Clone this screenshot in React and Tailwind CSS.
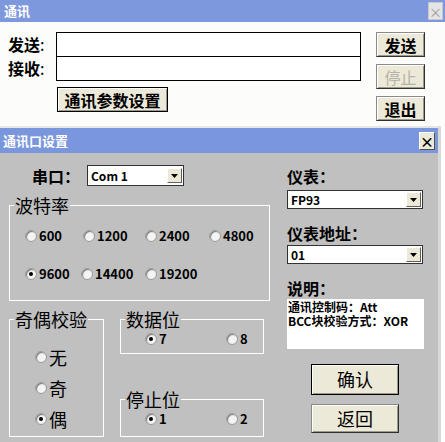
import React from 'react';

const FONT = { fontFamily: '"SimSun","Noto Sans CJK SC","DejaVu Sans",sans-serif' };

function Radio({ checked }) {
  return (
    <span className="relative inline-flex h-[12px] w-[12px] shrink-0 items-center justify-center rounded-full bg-[#f4f4f4] border border-[#9a9a9a] shadow-[inset_1px_1px_1px_#777]">
      {checked && <span className="h-[4px] w-[4px] rounded-full bg-black" />}
    </span>
  );
}

function RadioItem({ label, checked, w, big }) {
  return (
    <div className={`flex items-center gap-[2px] ${w}`}>
      <Radio checked={checked} />
      {big ? (
        <span className="text-[18px] leading-[20px] text-black">{label}</span>
      ) : (
        <span className="text-[13px] font-bold leading-[16px] text-black">{label}</span>
      )}
    </div>
  );
}

function Combo({ value, w, h }) {
  return (
    <div className={`flex items-center justify-between bg-white border border-[#333] ${w} ${h}`}>
      <span className="pl-[3px] text-[12px] font-bold leading-none text-black">{value}</span>
      <span className="mr-px flex h-[15px] w-[15px] items-center justify-center bg-[#ece9d8] border border-t-white border-l-white border-b-[#606060] border-r-[#606060]">
        <svg width="7" height="4" viewBox="0 0 7 4"><path d="M0 0h7L3.5 4z" fill="#000" /></svg>
      </span>
    </div>
  );
}

function WinButton({ children, className, disabled, dark }) {
  return (
    <div
      className={`flex items-center justify-center bg-[#ece9d8] border ${dark ? 'border-black' : 'border-[#8a8a8a] border-b-[#303030] border-r-[#303030]'} shadow-[inset_1px_1px_#fff,inset_-1px_-1px_#9c9a8c] ${disabled ? 'text-[#b5b2a6]' : 'text-black'} ${className}`}
    >
      {children}
    </div>
  );
}

function Group({ title, className, children }) {
  return (
    <fieldset className={`border border-white ${className}`}>
      <legend className="ml-[4px] h-[20px] px-[1px] text-[18px] leading-[20px] text-black">{title}</legend>
      {children}
    </fieldset>
  );
}

export default function App() {
  return (
    <div className="relative h-[442px] w-[445px] overflow-hidden bg-white" style={FONT}>
      {/* fenêtre 通讯 */}
      <div className="h-[126px] bg-[#fcfcfa]">
        <div className="flex h-[22px] items-center justify-between bg-[#7d98dd] pl-[4px] pr-[2px]">
          <span className="text-[13px] font-bold text-white">通讯</span>
          <span className="flex h-[18px] w-[15px] items-center justify-center bg-[#e4e4e4] border border-[#c8c8c8] text-[13px] leading-none text-[#9a9a9a]">×</span>
        </div>
        <div className="flex">
          <div className="pt-[10px] pl-[8px]">
            <div className="flex">
              <div className="w-[48px]">
                <div className="flex h-[24px] items-center text-[16px] font-bold leading-none">发送<span className="font-normal">:</span></div>
                <div className="flex h-[24px] items-center text-[16px] font-bold leading-none">接收<span className="font-normal">:</span></div>
              </div>
              <div>
                <div className="h-[25px] w-[305px] border border-black bg-white" />
                <div className="-mt-px h-[25px] w-[305px] border border-black bg-white" />
              </div>
            </div>
            <WinButton dark className="ml-[49px] mt-[6px] h-[25px] w-[111px] text-[16px] font-bold">通讯参数设置</WinButton>
          </div>
          <div className="ml-[15px] flex flex-col gap-[7px] pt-[10px]">
            <WinButton className="h-[25px] w-[49px] text-[16px] font-bold">发送</WinButton>
            <WinButton disabled className="h-[25px] w-[49px] text-[16px]">停止</WinButton>
            <WinButton className="h-[25px] w-[49px] text-[16px] font-bold">退出</WinButton>
          </div>
        </div>
      </div>

      {/* fenêtre 通讯口设置 */}
      <div className="w-[441px] border-t-2 border-[#e6e6e6] border-r-[3px] border-r-[#d8d8d8]">
        <div className="flex h-[25px] items-center justify-between bg-[#7a96dc] pl-[3px] pr-[3px]">
          <span className="text-[13px] font-bold text-white">通讯口设置</span>
          <span className="flex h-[18px] w-[16px] items-center justify-center bg-[#ece9d8] border border-t-white border-l-white border-b-[#505050] border-r-[#505050] text-[14px] font-bold leading-none text-black">×</span>
        </div>
        <div className="flex h-[290px] bg-[#c0c0c0] pl-[9px]">
          {/* colonne gauche */}
          <div className="w-[255px]">
            <div className="mt-[12px] flex h-[21px] items-center">
              <span className="ml-[23px] w-[55px] text-[16px] font-bold leading-none">串口：</span>
              <Combo value="Com 1" w="w-[97px]" h="h-[21px]" />
            </div>
            <Group title="波特率" className="mt-[9px] h-[106px] w-[255px]">
              <div className="mt-[11px] flex h-[20px] items-center pl-[15px]">
                <RadioItem label="600" w="w-[58px]" />
                <RadioItem label="1200" w="w-[62px]" />
                <RadioItem label="2400" w="w-[64px]" />
                <RadioItem label="4800" w="w-[60px]" />
              </div>
              <div className="mt-[18px] flex h-[20px] items-center pl-[15px]">
                <RadioItem label="9600" checked w="w-[56px]" />
                <RadioItem label="14400" w="w-[64px]" />
                <RadioItem label="19200" w="w-[64px]" />
              </div>
            </Group>
            <div className="mt-[8px] flex">
              <Group title="奇偶校验" className="h-[128px] w-[95px]">
                <div className="flex flex-col gap-[11px] pl-[25px] pt-[18px]">
                  <RadioItem label="无" big />
                  <RadioItem label="奇" big />
                  <RadioItem label="偶" checked big />
                </div>
              </Group>
              <div className="ml-[16px] w-[144px]">
                <Group title="数据位" className="h-[45px] w-[144px]">
                  <div className="mt-[1px] flex h-[18px] items-center pl-[24px]">
                    <RadioItem label="7" checked w="w-[81px]" />
                    <RadioItem label="8" />
                  </div>
                </Group>
                <Group title="停止位" className="mt-[35px] h-[48px] w-[144px]">
                  <div className="mt-[1px] flex h-[18px] items-center pl-[24px]">
                    <RadioItem label="1" checked w="w-[81px]" />
                    <RadioItem label="2" />
                  </div>
                </Group>
              </div>
            </div>
          </div>

          {/* colonne droite */}
          <div className="ml-[23px] w-[137px]">
            <div className="mt-[13px] text-[16px] font-bold leading-[20px]">仪表：</div>
            <div className="mt-[4px]"><Combo value="FP93" w="w-[136px]" h="h-[19px]" /></div>
            <div className="mt-[14px] text-[16px] font-bold leading-[20px]">仪表地址：</div>
            <div className="mt-[2px]"><Combo value="01" w="w-[136px]" h="h-[19px]" /></div>
            <div className="mt-[14px] text-[16px] font-bold leading-[20px]">说明：</div>
            <div className="mt-[1px] h-[50px] w-[137px] bg-white pl-[1px] pt-[1px] text-[12px] font-bold leading-[14px]">
              <div>通讯控制码：Att</div>
              <div>BCC块校验方式：XOR</div>
            </div>
            <WinButton dark className="ml-[24px] mt-[15px] h-[31px] w-[88px] text-[18px]">确认</WinButton>
            <WinButton className="ml-[24px] mt-[9px] h-[29px] w-[88px] text-[18px]">返回</WinButton>
          </div>
        </div>
      </div>
    </div>
  );
}
